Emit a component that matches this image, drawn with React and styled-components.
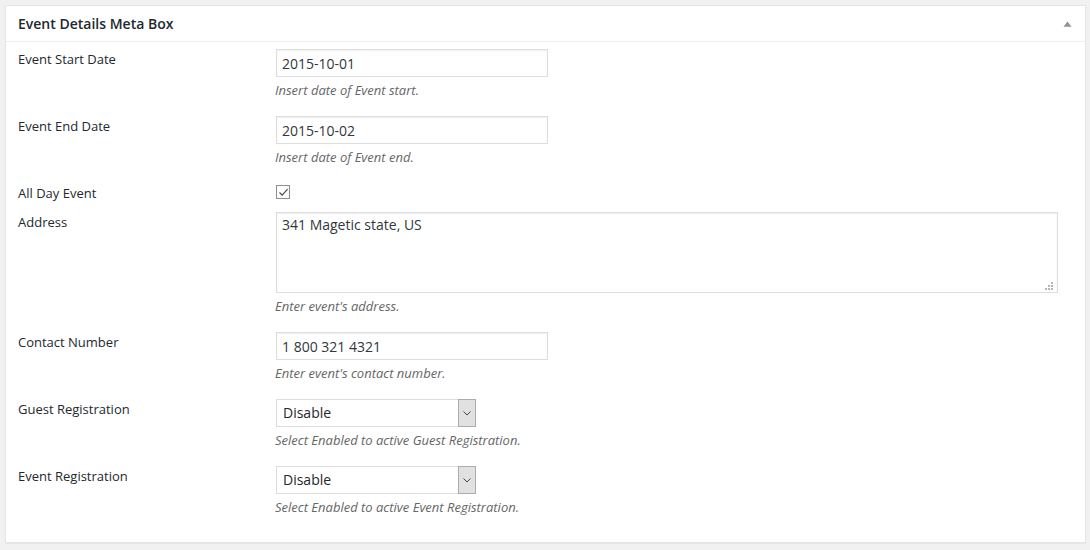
import { createGlobalStyle, styled } from "styled-components";

const GlobalStyle = createGlobalStyle`
  body {
    margin: 0;
    background: #f1f1f1;
    font-family: "Open Sans", "Liberation Sans", sans-serif;
    color: #23282d;
  }
`;

const fields = [
  { label: "Event Start Date", type: "text", value: "2015-10-01", desc: "Insert date of Event start." },
  { label: "Event End Date", type: "text", value: "2015-10-02", desc: "Insert date of Event end." },
  { label: "All Day Event", type: "checkbox" },
  { label: "Address", type: "textarea", value: "341 Magetic state, US", desc: "Enter event's address." },
  { label: "Contact Number", type: "text", value: "1 800 321 4321", desc: "Enter event's contact number." },
  { label: "Guest Registration", type: "select", value: "Disable", desc: "Select Enabled to active Guest Registration." },
  { label: "Event Registration", type: "select", value: "Disable", desc: "Select Enabled to active Event Registration." },
];

const Field = ({ field }) => {
  if (field.type === "checkbox") {
    return (
      <Check>
        <svg width="11" height="11" viewBox="0 0 11 11">
          <path d="M1.5 5.5 L4.2 8.2 L9.6 2.2" fill="none" stroke="#3c434a" strokeWidth="1.1" />
        </svg>
      </Check>
    );
  }
  if (field.type === "textarea") {
    return (
      <AreaWrap>
        <Area defaultValue={field.value} />
        <Grip width="9" height="9" viewBox="0 0 9 9">
          <rect x="6" y="0" width="2" height="2" />
          <rect x="3" y="3" width="2" height="2" />
          <rect x="6" y="3" width="2" height="2" />
          <rect x="0" y="6" width="2" height="2" />
          <rect x="3" y="6" width="2" height="2" />
          <rect x="6" y="6" width="2" height="2" />
        </Grip>
      </AreaWrap>
    );
  }
  if (field.type === "select") {
    return (
      <Select>
        <SelectText>{field.value}</SelectText>
        <SelectArrow>
          <svg width="8" height="5" viewBox="0 0 8 5">
            <path d="M0.5 0.5 L4 4 L7.5 0.5" fill="none" stroke="#444" strokeWidth="1" />
          </svg>
        </SelectArrow>
      </Select>
    );
  }
  return <Input defaultValue={field.value} />;
};

const App = () => {
  return (
    <>
      <GlobalStyle />
      <Box>
        <Header>
          <Title>Event Details Meta Box</Title>
          <svg width="9" height="6" viewBox="0 0 9 6">
            <path d="M0.5 5.8 L4.5 0.5 L8.5 5.8 Z" fill="#8d9399" />
          </svg>
        </Header>
        <Body>
          {fields.map((f) => (
            <Row key={f.label} $pb={f.type === "checkbox" ? 2 : 10}>
              <Label>{f.label}</Label>
              <Cell>
                <Field field={f} />
                {f.desc && <Desc>{f.desc}</Desc>}
              </Cell>
            </Row>
          ))}
        </Body>
      </Box>
    </>
  );
};

const Box = styled.section`
  margin: 5px 4px 5px 5px;
  background: #fff;
  border: 1px solid #e5e5e5;
  box-shadow: 0 1px 1px rgba(0, 0, 0, 0.04);
`;

const Header = styled.div`
  height: 35px;
  padding: 0 13px 0 12px;
  border-bottom: 1px solid #eee;
  display: flex;
  align-items: center;
  justify-content: space-between;
`;

const Title = styled.h2`
  margin: 0;
  font-size: 14px;
  font-weight: 600;
  line-height: 33px;
  color: #23282d;
`;

const Body = styled.div`
  padding: 0 26px 16px 12px;
`;

const Row = styled.div`
  display: grid;
  grid-template-columns: 257px 1fr;
  padding: 7px 0 ${(p) => p.$pb}px;
`;

const Label = styled.div`
  font-size: 13px;
  line-height: 20px;
  color: #23282d;
`;

const Cell = styled.div`
  display: flex;
  flex-direction: column;
  align-items: flex-start;
`;

const Input = styled.input`
  box-sizing: border-box;
  width: 272px;
  height: 28px;
  margin: 0 1px;
  padding: 0 5px;
  border: 1px solid #ddd;
  box-shadow: inset 0 1px 2px rgba(0, 0, 0, 0.07);
  font-family: inherit;
  font-size: 14px;
  color: #32373c;
  outline: none;
`;

const AreaWrap = styled.div`
  position: relative;
  align-self: stretch;
  margin: 0 1px;
  height: 81px;
`;

const Area = styled.textarea`
  box-sizing: border-box;
  display: block;
  width: 100%;
  height: 81px;
  margin: 0;
  padding: 2px 5px;
  border: 1px solid #ddd;
  box-shadow: inset 0 1px 2px rgba(0, 0, 0, 0.07);
  font-family: inherit;
  font-size: 14px;
  line-height: 1.4;
  color: #32373c;
  resize: none;
  outline: none;
`;

const Grip = styled.svg`
  position: absolute;
  right: 4px;
  bottom: 2px;
  fill: #b5b5b5;
`;

const Check = styled.span`
  box-sizing: border-box;
  width: 14px;
  height: 14px;
  margin: 2px 1px 0;
  border: 1px solid #8c8f94;
  display: flex;
  align-items: center;
  justify-content: center;
  background: #fff;
`;

const Select = styled.div`
  box-sizing: border-box;
  width: 200px;
  height: 28px;
  margin: 0 1px;
  border: 1px solid #ddd;
  display: flex;
  align-items: stretch;
  background: #fff;
`;

const SelectText = styled.span`
  flex: 1;
  padding-left: 6px;
  font-size: 14px;
  line-height: 26px;
  color: #23282d;
`;

const SelectArrow = styled.span`
  width: 16px;
  margin: -1px -1px -1px 0;
  border: 1px solid #acacac;
  background: #e1e1e1;
  display: flex;
  align-items: center;
  justify-content: center;
`;

const Desc = styled.p`
  margin: 4px 0 0;
  font-size: 13px;
  line-height: 18px;
  font-style: italic;
  color: #666;
`;

export default App;
